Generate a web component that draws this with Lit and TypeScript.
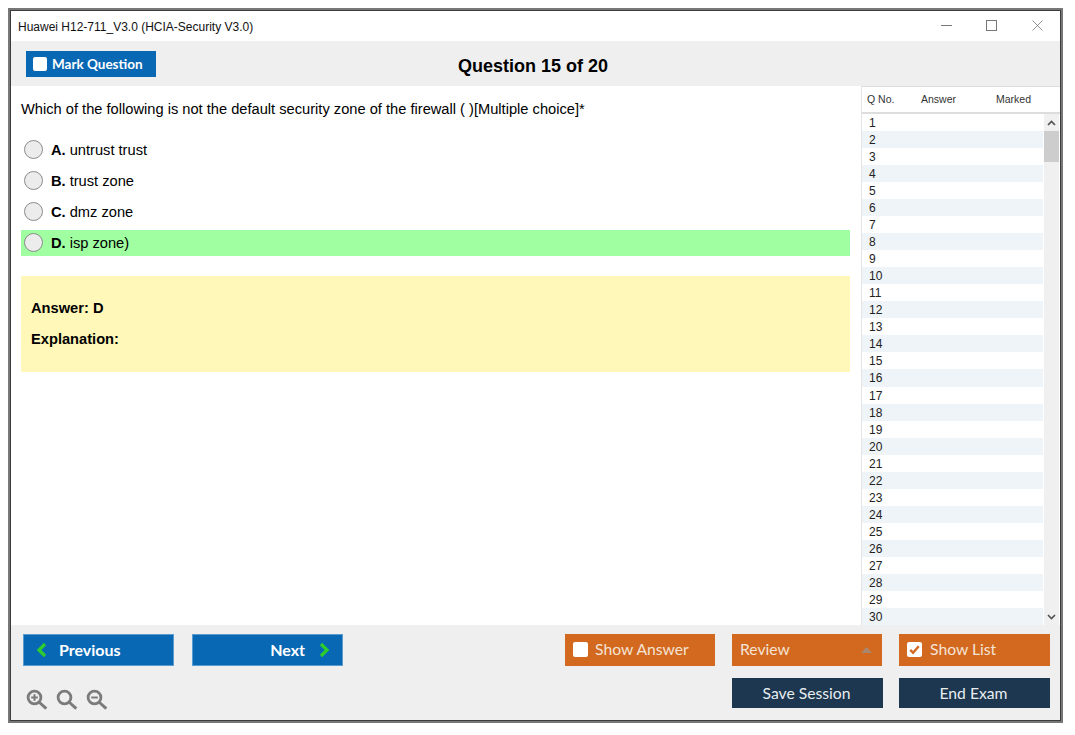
import { LitElement, html, css, svg } from "lit";
import { customElement } from "lit/decorators.js";

const check = svg`<path d="M3.5 8.5l3 3 6-7" fill="none" stroke="#d2691f" stroke-width="2.6"/>`;

@customElement("app-root")
export class AppRoot extends LitElement {
  static styles = css`
    :host { display: block; width: 1075px; height: 735px; background: #fff; font-family: "Liberation Sans", Arial, sans-serif; color: #000; overflow: hidden; }
    * { box-sizing: border-box; }
    .frame { margin: 8px 0 0 8px; width: 1055px; height: 715px; border: 2px solid #777; display: flex; flex-direction: column; background: #fff; box-shadow: inset 0 0 0 1px #3c3c3c; padding: 1px; }
    .title { height: 30px; flex: none; display: flex; align-items: center; padding: 2px 0 0 7px; font-size: 12px; color: #111; }
    .win { margin-left: auto; display: flex; align-items: center; gap: 34px; padding: 0 17px 3px 0; }
    .win svg { display: block; }
    .win svg:last-child { margin-left: 1px; }
    .tool { height: 45px; flex: none; background: #efefef; display: flex; align-items: center; position: relative; padding: 0 0 0 15px; }
    .qtitle { position: absolute; left: 0; right: 5px; top: 15px; text-align: center; font-size: 18px; font-weight: 700; }
    .mark { width: 130px; height: 26px; background: #0868b4; color: #fff; display: flex; align-items: center; gap: 5px; padding-left: 7px; font: 700 13.5px Lato, sans-serif; }
    .box { width: 14px; height: 14px; background: #fff; border-radius: 2px; flex: none; }
    .mid { flex: 1; min-height: 0; display: flex; }
    .main { flex: 1; padding: 14px 0 0 10px; min-width: 0; }
    .q { font-size: 14.67px; line-height: 18px; margin-bottom: 19px; }
    .opt { width: 829px; height: 26px; display: flex; align-items: center; margin-bottom: 5px; font-size: 14.67px; padding-left: 3px; }
    .opt.ok { background: #a0ffa0; }
    .radio { width: 19px; height: 19px; border-radius: 50%; border: 1px solid #8a8a8a; background: #ececec; margin: 0 8px 1px 0; flex: none; }
    .opt b { margin-right: 4px; }
    .ans { width: 829px; height: 96px; margin-top: 20px; background: #fff8b8; padding: 23px 10px 0; font-weight: 700; font-size: 14.67px; line-height: 18px; }
    .ans div + div { margin-top: 13px; }
    .side { width: 199px; flex: none; display: flex; flex-direction: column; border-left: 1px solid #e4e4e4; border-top: 1px solid #ddd; }
    .head { height: 27px; flex: none; display: grid; grid-template-columns: 54px 75px 1fr; align-items: center; font-size: 10.5px; color: #333; padding: 0 0 1px 5px; border-bottom: 2px solid #ddd; }
    .listwrap { flex: 1; display: flex; min-height: 0; }
    .rows { flex: 1; min-width: 0; overflow: hidden; }
    .row { height: 17.04px; font-size: 12px; line-height: 18px; padding-left: 7px; color: #222; }
    .row.alt { background: #eff4f8; }
    .scroll { width: 17px; flex: none; padding: 0 1px; background: #f0f0f0; background-clip: content-box; display: flex; flex-direction: column; }
    .arrow { height: 17px; flex: none; display: flex; align-items: center; justify-content: center; }
    .thumb { height: 31px; flex: none; background: #cdcdcd; }
    .grow { flex: 1; }
    .bottom { height: 95px; flex: none; background: #efefef; padding: 9px 10px 0 12px; display: grid; grid-template-columns: 169px 151px 1fr 167px 167px 151px; grid-template-rows: 32px 30px; row-gap: 12px; }
    .btn { width: 151px; height: 32px; display: flex; align-items: center; padding-bottom: 2px; font: 400 15.7px Lato, sans-serif; color: #fff; }
    .chev { margin-top: 2px; }
    .caret { margin-top: 2px; }
    .blue { background: #0868b4; border: 1px solid #5a9bd0; font-size: 16px; font-weight: 700; }
    .orange { background: #d2691f; color: #f5e3d5; padding-left: 8px; gap: 7px; }
    .orange .box { width: 15px; height: 15px; }
    .navy { background: #1c374f; height: 30px; justify-content: center; padding: 0 2px 1px 0; color: #e8edf1; }
    .prev { grid-column: 1; padding-left: 12px; gap: 12px; }
    .next { grid-column: 2; justify-content: flex-end; padding-right: 12px; gap: 14px; }
    .sa { grid-column: 4; width: 150px; }
    .rv { grid-column: 5; width: 150px; justify-content: space-between; padding-right: 10px; }
    .sl { grid-column: 6; gap: 8px; }
    .zoom { grid-column: 1 / 4; grid-row: 2; display: flex; gap: 8px; padding: 11px 0 0 3px; }
    .ss { grid-column: 5; grid-row: 2; }
    .ee { grid-column: 6; grid-row: 2; }
  `;

  private mag(kind: string) {
    return html`<svg width="22" height="22" viewBox="0 0 22 22" fill="none" stroke="#7b7b7b">
      <circle cx="8.5" cy="8.5" r="6.4" stroke-width="2.8"/>
      <path d="M13.5 13.5l6.8 6.2" stroke-width="3"/>
      ${kind !== "" ? svg`<path d="M5.2 8.5h6.6" stroke-width="2"/>` : ""}
      ${kind === "+" ? svg`<path d="M8.5 5.2v6.6" stroke-width="2"/>` : ""}
    </svg>`;
  }

  render() {
    const rows = Array.from({ length: 30 }, (_, i) => i + 1);
    const opts = [["A.", "untrust trust"], ["B.", "trust zone"], ["C.", "dmz zone"], ["D.", "isp zone)"]];
    return html`<div class="frame">
      <div class="title">Huawei H12-711_V3.0 (HCIA-Security V3.0)
        <div class="win">
          <svg width="11" height="11" viewBox="0 0 11 11"><path d="M0 5.5h11" stroke="#777"/></svg>
          <svg width="11" height="11" viewBox="0 0 11 11"><rect x=".5" y=".5" width="10" height="10" fill="none" stroke="#777"/></svg>
          <svg width="11" height="11" viewBox="0 0 11 11"><path d="M.5.5l10 10M10.5.5l-10 10" stroke="#777" stroke-width=".8"/></svg>
        </div>
      </div>
      <div class="tool">
        <div class="mark"><span class="box"></span>Mark Question</div>
        <div class="qtitle">Question 15 of 20</div>
      </div>
      <div class="mid">
        <div class="main">
          <div class="q">Which of the following is not the default security zone of the firewall ( )[Multiple choice]*</div>
          ${opts.map(([k, v], i) => html`<div class="opt ${i === 3 ? "ok" : ""}"><span class="radio"></span><b>${k}</b>${v}</div>`)}
          <div class="ans"><div>Answer: D</div><div>Explanation:</div></div>
        </div>
        <div class="side">
          <div class="head"><span>Q No.</span><span>Answer</span><span>Marked</span></div>
          <div class="listwrap">
            <div class="rows">${rows.map((n) => html`<div class="row ${n % 2 === 0 ? "alt" : ""}">${n}</div>`)}</div>
            <div class="scroll">
              <div class="arrow"><svg width="9" height="6" viewBox="0 0 9 6"><path d="M1 5l3.5-3.5L8 5" fill="none" stroke="#505050" stroke-width="1.6"/></svg></div>
              <div class="thumb"></div>
              <div class="grow"></div>
              <div class="arrow"><svg width="9" height="6" viewBox="0 0 9 6"><path d="M1 1l3.5 3.5L8 1" fill="none" stroke="#505050" stroke-width="1.6"/></svg></div>
            </div>
          </div>
        </div>
      </div>
      <div class="bottom">
        <div class="btn blue prev"><svg class="chev" width="11" height="16" viewBox="0 0 11 16"><path d="M9 2L3 8l6 6" fill="none" stroke="#2ecc2e" stroke-width="3.2"/></svg>Previous</div>
        <div class="btn blue next">Next<svg class="chev" width="11" height="16" viewBox="0 0 11 16"><path d="M2 2l6 6-6 6" fill="none" stroke="#2ecc2e" stroke-width="3.2"/></svg></div>
        <div class="btn orange sa"><span class="box"></span>Show Answer</div>
        <div class="btn orange rv">Review<svg class="caret" width="11" height="6" viewBox="0 0 11 6"><path d="M5.5 0L11 6H0z" fill="#a8876e"/></svg></div>
        <div class="btn orange sl"><svg class="box" width="15" height="15" viewBox="0 0 16 16">${check}</svg>Show List</div>
        <div class="zoom">${this.mag("+")}${this.mag("")}${this.mag("-")}</div>
        <div class="btn navy ss">Save Session</div>
        <div class="btn navy ee">End Exam</div>
      </div>
    </div>`;
  }
}
